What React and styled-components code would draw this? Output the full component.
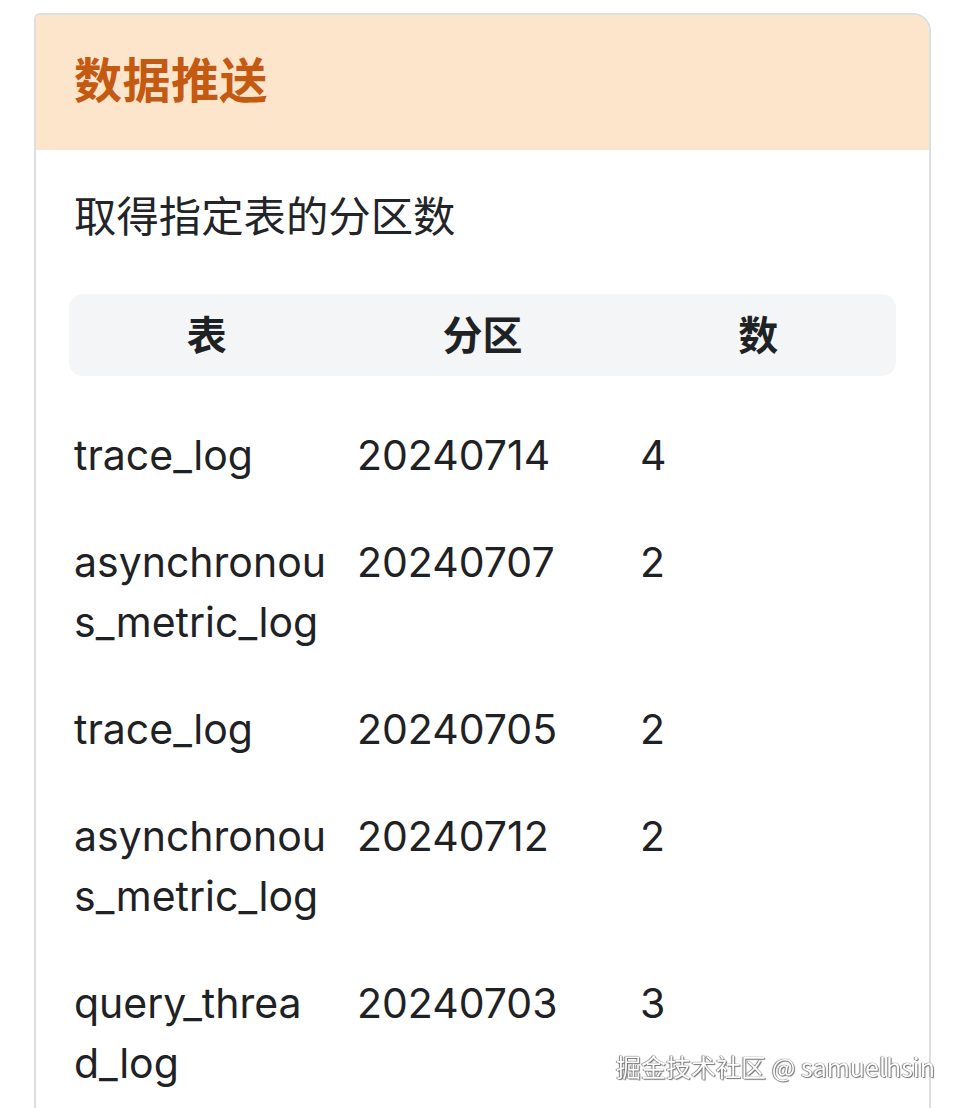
import React from "react";
import styled, { createGlobalStyle } from "styled-components";

const Global = createGlobalStyle`
  html, body { margin: 0; padding: 0; background: #ffffff; }
  body {
    font-family: "Inter", "Noto Sans CJK SC", sans-serif;
    color: #1f2225;
    -webkit-font-smoothing: antialiased;
  }
`;

const Page = styled.div`
  padding: 13px 33px 0 34px;
  box-sizing: border-box;
`;

const Card = styled.section`
  border: 2px solid #dcdfe2;
  border-bottom: none;
  border-radius: 6px 18px 0 0;
  overflow: hidden;
  background: #ffffff;
`;

const CardHeader = styled.header`
  height: 135px;
  box-sizing: border-box;
  display: flex;
  align-items: center;
  padding: 0 38px 12px;
  background: #fde5cc;
`;

const Title = styled.h2`
  margin: 0;
  font-size: 48px;
  font-weight: 700;
  color: #c45911;
  letter-spacing: 0.5px;
`;

const CardBody = styled.div`
  padding: 37px 33px 40px 33px;
`;

const Subtitle = styled.p`
  margin: 0 0 47px 5px;
  font-size: 42.4px;
  line-height: 60px;
  color: #222428;
`;

const HeadRow = styled.div`
  display: grid;
  grid-template-columns: repeat(3, 1fr);
  height: 82px;
  align-items: center;
  background: #f3f5f7;
  border-radius: 14px;
  padding-bottom: 4px;
  box-sizing: border-box;
`;

const HeadCell = styled.div`
  text-align: center;
  font-size: 40px;
  font-weight: 700;
  color: #1f2225;
`;

const Rows = styled.div`
  margin-top: 25px;
  padding-left: 5px;
`;

const Row = styled.div`
  display: grid;
  grid-template-columns: 252px 252px 1fr;
  column-gap: 31px;
  padding: 24px 0 23px;
`;

const Cell = styled.div`
  font-size: 41px;
  line-height: 60px;
  overflow-wrap: normal;
  word-break: normal;
  color: #1f2225;
`;

const Watermark = styled.div`
  position: fixed;
  right: 29px;
  bottom: 24px;
  font-family: "Noto Sans CJK SC", "Noto Sans", sans-serif;
  font-size: 25px;
  line-height: 36px;
  color: #ffffff;
  text-shadow: 0 0 1px #555, 1px 1px 1px #777, -1px 0 1px #888;
  white-space: nowrap;
`;

const rows = [
  [["trace_log"], ["20240714"], ["4"]],
  [["asynchronou", "s_metric_log"], ["20240707"], ["2"]],
  [["trace_log"], ["20240705"], ["2"]],
  [["asynchronou", "s_metric_log"], ["20240712"], ["2"]],
  [["query_threa", "d_log"], ["20240703"], ["3"]],
];

function Text({ parts }) {
  return parts.map((p, i) => (
    <React.Fragment key={i}>
      {i > 0 && <wbr />}
      {p}
    </React.Fragment>
  ));
}

export default function App() {
  return (
    <>
      <Global />
      <Page>
        <Card>
          <CardHeader>
            <Title>数据推送</Title>
          </CardHeader>
          <CardBody>
            <Subtitle>取得指定表的分区数</Subtitle>
            <HeadRow>
              <HeadCell>表</HeadCell>
              <HeadCell>分区</HeadCell>
              <HeadCell>数</HeadCell>
            </HeadRow>
            <Rows>
              {rows.map((r, i) => (
                <Row key={i}>
                  {r.map((c, j) => (
                    <Cell key={j}>
                      <Text parts={c} />
                    </Cell>
                  ))}
                </Row>
              ))}
            </Rows>
          </CardBody>
        </Card>
      </Page>
      <Watermark>掘金技术社区 @ samuelhsin</Watermark>
    </>
  );
}
